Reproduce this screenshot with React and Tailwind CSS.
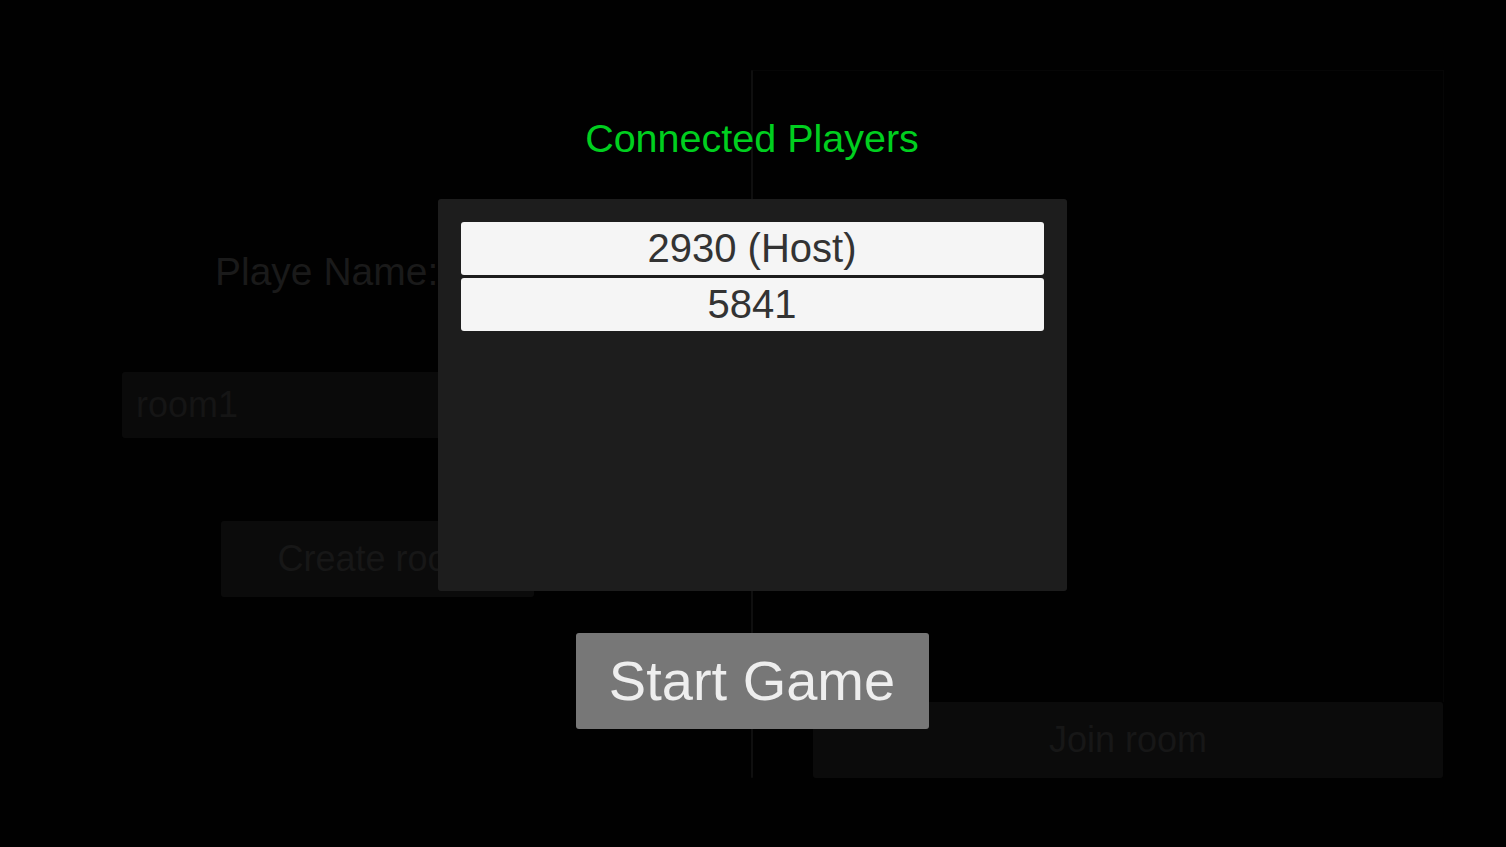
const font = "font-['Liberation_Sans',Arial,sans-serif]"

const players = [
  { id: 2930, host: true },
  { id: 5841, host: false },
]

function LobbyBackdrop() {
  return (
    <div className="flex h-full pt-[70px]">
      {/* Create side */}
      <div className="w-[751px] flex flex-col">
        <div className="mt-[179px] pl-[215px] text-[39px] leading-[45px] text-[#1a1a1a]">
          Playe Name:
        </div>
        <div className="mt-[78px] ml-[122px] w-[508px] h-[66px] flex items-center pl-[14px] rounded-[3px] bg-[#0a0a0a] text-[36px] text-[#151515]">
          room1
        </div>
        <button className="mt-[83px] ml-[221px] w-[313px] h-[76px] flex items-center justify-center rounded-[3px] bg-[#0b0b0b] text-[36px] text-[#171717]">
          Create room
        </button>
      </div>

      {/* Divider */}
      <div className="w-[2px] h-[708px] bg-[#0f0f0f] rounded-full" />

      {/* Join side */}
      <div className="w-[691px] flex flex-col">
        <div className="h-[632px] border-t border-r border-[#060606]" />
        <button className="ml-[60px] w-[630px] h-[76px] flex items-center justify-center rounded-[3px] bg-[#0b0b0b] text-[36px] text-[#171717]">
          Join room
        </button>
      </div>
    </div>
  )
}

export default function App() {
  return (
    <div className={`relative w-[1506px] h-[847px] overflow-hidden bg-[#010101] ${font}`}>
      <LobbyBackdrop />

      {/* Connected players overlay */}
      <div className="absolute inset-0 flex flex-col items-center pt-[116px] pr-[2px]">
        <h1 className="text-[39.5px] leading-[45px] text-[#00cf1f]">Connected Players</h1>

        <div className="mt-[38px] w-[629px] h-[392px] rounded-[3px] bg-[#1d1d1d] pt-[23px] px-[23px] flex flex-col gap-[3px]">
          {players.map((p) => (
            <div
              key={p.id}
              className="h-[53px] flex items-center justify-center rounded-[3px] bg-[#f5f5f5] text-[40px] leading-[53px] text-[#333333]"
            >
              {p.id}{p.host ? ' (Host)' : ''}
            </div>
          ))}
        </div>

        <button className="mt-[42px] w-[353px] h-[96px] flex items-center justify-center rounded-[3px] bg-[#777777] text-[56px] leading-[96px] text-[#eeeeee]">
          Start Game
        </button>
      </div>
    </div>
  )
}
